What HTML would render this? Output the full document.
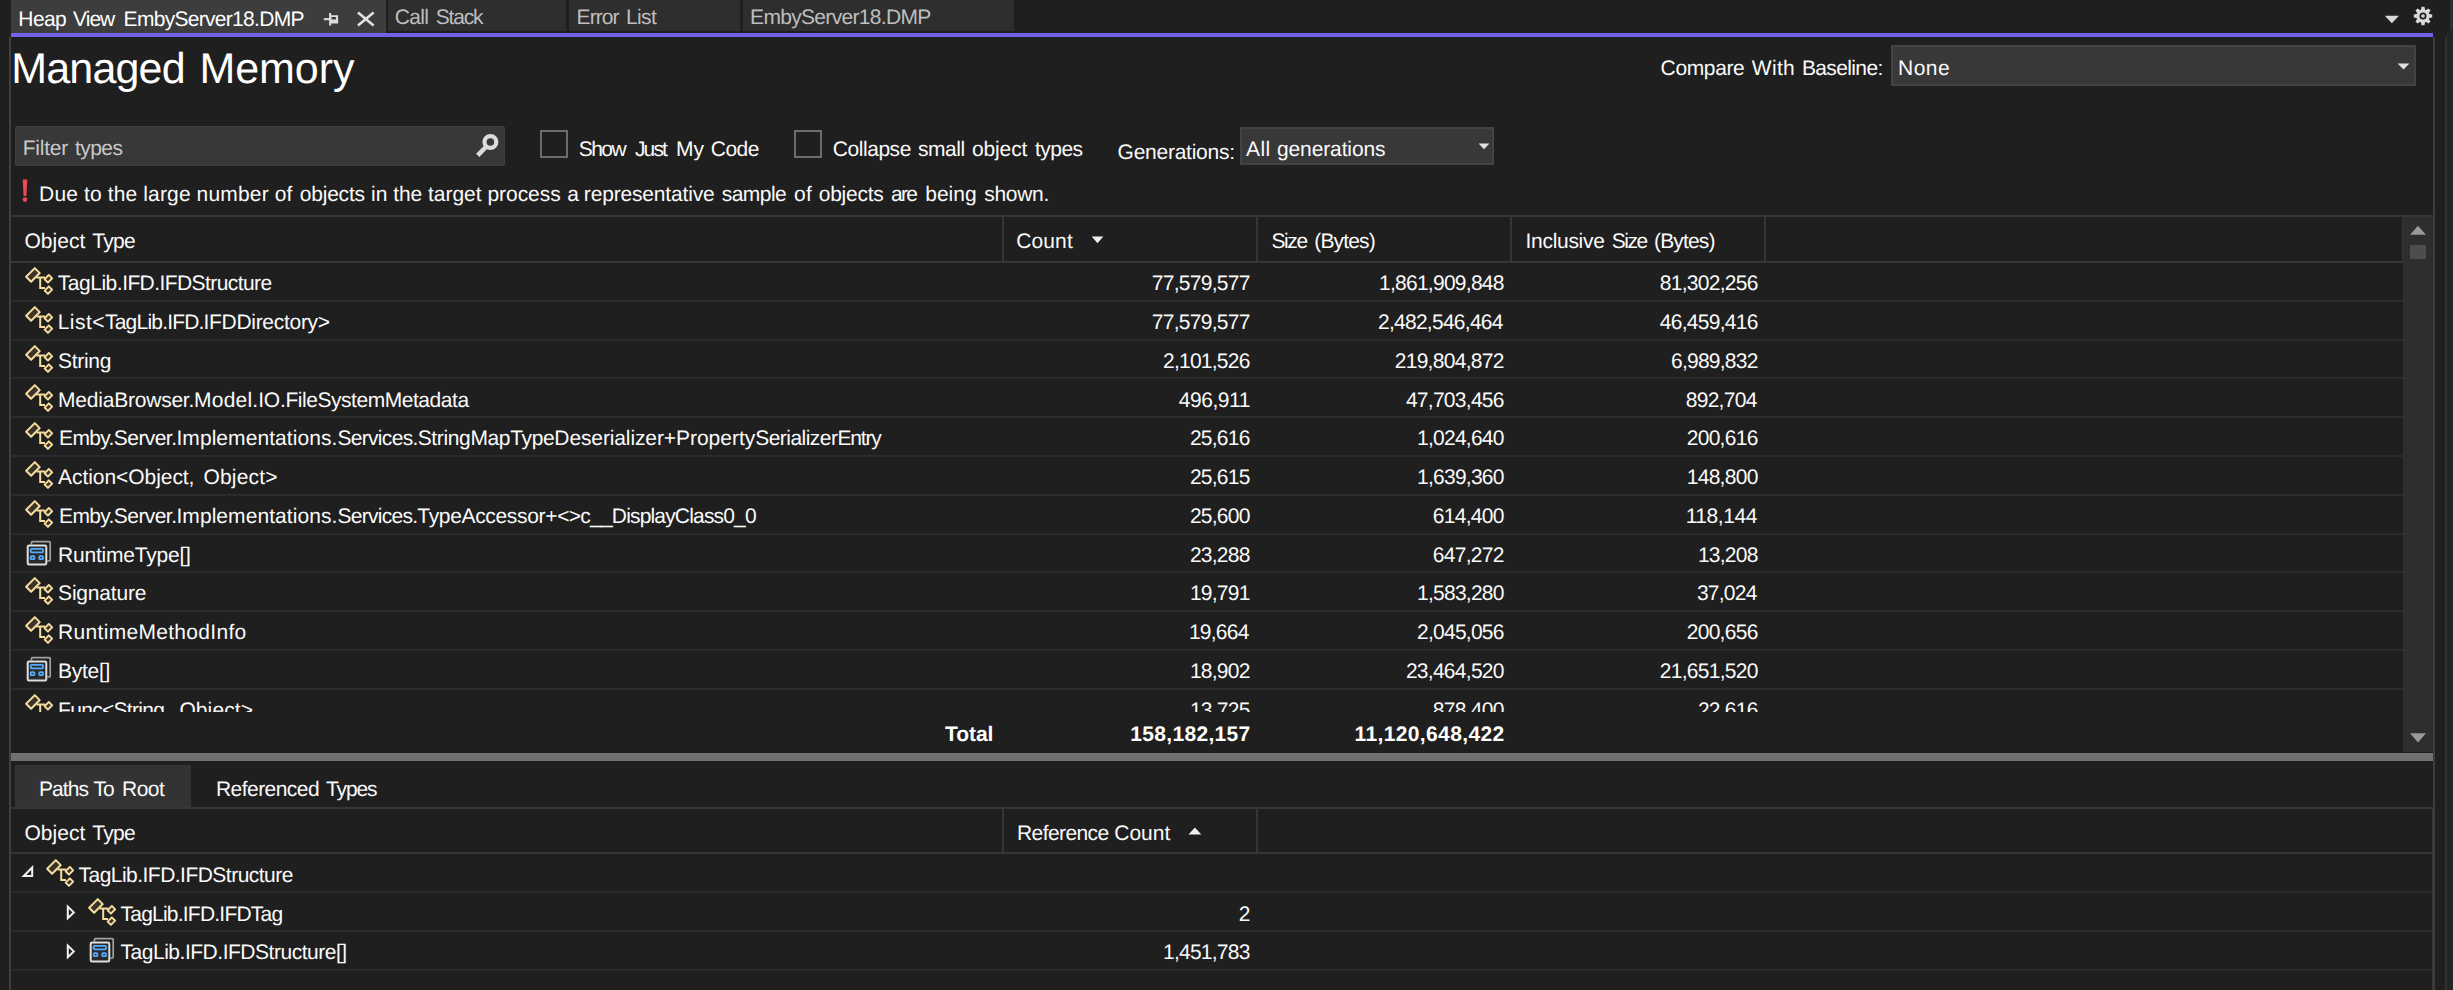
<!DOCTYPE html>
<html lang="en">
<head>
<meta charset="utf-8">
<title>Heap View EmbyServer18.DMP</title>
<style>
html,body{margin:0;padding:0;background:#1f1f1f;}
body{width:2453px;height:990px;position:relative;overflow:hidden;font-family:"Liberation Sans",sans-serif;color:#fafafa;text-rendering:geometricPrecision;}
.a{position:absolute;}
.t{position:absolute;white-space:pre;}
.i{position:absolute;overflow:visible;}
.hl{position:absolute;height:2px;background:#363636;}
.vl{position:absolute;width:2px;background:#363636;}
.rl{position:absolute;height:2px;background:#2b2b2b;left:11px;width:2392px;}
.rl2{position:absolute;height:2px;background:#2b2b2b;left:11px;width:2421px;}
.box{position:absolute;background:#383838;box-sizing:border-box;border:2px solid #434343;}
.cb{position:absolute;box-sizing:border-box;border:2px solid #6c6c6c;background:#1f1f1f;}
#clip{position:absolute;left:0;top:0;width:2403px;height:712px;overflow:hidden;}
</style>
</head>
<body>
<!-- document tab strip -->
<div class="a" style="left:11px;top:0;width:375px;height:34px;background:#3d3d3d"></div>
<div class="a" style="left:387.5px;top:0;width:178px;height:31px;background:#2e2e2e"></div>
<div class="a" style="left:569px;top:0;width:170.5px;height:31px;background:#2e2e2e"></div>
<div class="a" style="left:742.5px;top:0;width:271px;height:31px;background:#2e2e2e"></div>
<div class="a" style="left:11px;top:33px;width:2422px;height:4px;background:#7160e8"></div>
<!-- pin icon -->
<svg class="i" style="left:322px;top:11px" width="18" height="16" viewBox="0 0 18 16"><g fill="#dcdcdc"><rect x="1.8" y="7.1" width="6" height="2.1"/><rect x="7.1" y="2" width="2.1" height="12.5"/><path d="M9 4.3H16.1V12.6H9ZM9.4 6.1V8.6H13.9V6.1Z" fill-rule="evenodd"/></g></svg>
<!-- close icon -->
<svg class="i" style="left:356px;top:10px" width="20" height="18" viewBox="0 0 20 18"><path d="M2 2.5L17.6 15.5M17.6 2.5L2 15.5" stroke="#e2e2e2" stroke-width="2.6" fill="none"/></svg>
<!-- tab strip right: dropdown + gear -->
<svg class="i" style="left:2384px;top:14px" width="16" height="10" viewBox="0 0 16 10"><path d="M0.8 1.8H15L7.9 9.3Z" fill="#d8d8d8"/></svg>
<svg class="i" style="left:2412px;top:5px" width="22" height="22" viewBox="-11 -11 22 22"><g fill="#d8d8d8"><circle r="6.6"/><path d="M-1.5 -9.2H1.5L2.3 -5H-2.3ZM-1.5 9.2H1.5L2.3 5H-2.3Z" transform="rotate(0)"/><path d="M-1.5 -9.2H1.5L2.3 -5H-2.3ZM-1.5 9.2H1.5L2.3 5H-2.3Z" transform="rotate(45)"/><path d="M-1.5 -9.2H1.5L2.3 -5H-2.3ZM-1.5 9.2H1.5L2.3 5H-2.3Z" transform="rotate(90)"/><path d="M-1.5 -9.2H1.5L2.3 -5H-2.3ZM-1.5 9.2H1.5L2.3 5H-2.3Z" transform="rotate(135)"/></g><circle r="3.5" fill="#1f1f1f"/><circle r="1.8" fill="#d8d8d8"/></svg>
<!-- window frame lines -->
<div class="vl" style="left:9px;top:37px;height:953px;background:#3f3f3f"></div>
<div class="vl" style="left:2433px;top:37px;height:953px;background:#3d3d3d"></div>
<div class="vl" style="left:2445px;top:37px;height:953px;background:#333"></div>
<div class="a" style="left:2447px;top:33px;width:6px;height:957px;background:#242424"></div>
<div class="a" style="left:2450px;top:0;width:3px;height:31px;background:#2d2d2d"></div>

<!-- baseline combo -->
<div class="box" style="left:1890.5px;top:45.3px;width:525.5px;height:40.5px"></div>
<svg class="i" style="left:2397px;top:63px" width="13" height="7" viewBox="0 0 13 7"><path d="M0.6 0.6H12.4L6.5 6.6Z" fill="#e0e0e0"/></svg>

<!-- filter box -->
<div class="box" style="left:15px;top:126px;width:490.3px;height:40px;border:1px solid #3f3f3f;border-radius:2px"></div>
<svg class="i" style="left:470px;top:130px" width="32" height="30" viewBox="470 130 32 30"><circle cx="490.4" cy="142" r="5.9" fill="none" stroke="#dcdcdc" stroke-width="4.2"/><path d="M486.4 146.5L477.7 155.4" stroke="#dcdcdc" stroke-width="4.6" fill="none"/></svg>
<!-- checkboxes -->
<div class="cb" style="left:540px;top:130px;width:28px;height:28px"></div>
<div class="cb" style="left:794px;top:130px;width:28px;height:28px"></div>
<!-- generations combo -->
<div class="box" style="left:1240px;top:126.5px;width:254px;height:38.5px"></div>
<svg class="i" style="left:1478px;top:142.5px" width="12" height="7" viewBox="0 0 12 7"><path d="M0.6 0.6H11.4L6 6.2Z" fill="#e0e0e0"/></svg>
<!-- warning mark -->
<svg class="i" style="left:20px;top:177px" width="10" height="27" viewBox="20 177 10 27"><path d="M22.7 179.5H27.3L26.4 195.9H23.6Z" fill="#ee4b59"/><circle cx="25" cy="199.6" r="2.3" fill="#ee4b59"/></svg>

<!-- upper grid -->
<div class="hl" style="left:11px;top:215px;width:2422px"></div>
<div class="hl" style="left:11px;top:261px;width:2392px"></div>
<div class="vl" style="left:1002px;top:217px;height:44px"></div>
<div class="vl" style="left:1256px;top:217px;height:44px"></div>
<div class="vl" style="left:1510px;top:217px;height:44px"></div>
<div class="vl" style="left:1764px;top:217px;height:44px"></div>
<div class="vl" style="left:2401.5px;top:217px;height:44px;width:1.5px"></div>
<svg class="i" style="left:1091px;top:236px" width="13" height="8" viewBox="0 0 13 8"><path d="M0.7 0.5H12.3L6.5 7.2Z" fill="#f0f0f0"/></svg>
<div class="rl" style="top:300px"></div>
<div class="rl" style="top:339px"></div>
<div class="rl" style="top:377px"></div>
<div class="rl" style="top:416px"></div>
<div class="rl" style="top:455px"></div>
<div class="rl" style="top:494px"></div>
<div class="rl" style="top:533px"></div>
<div class="rl" style="top:571px"></div>
<div class="rl" style="top:610px"></div>
<div class="rl" style="top:649px"></div>
<div class="rl" style="top:688px"></div>
<div class="t" style="left:18.30px;top:9px;font-size:21px;line-height:21px;color:#ffffff;"><span style="letter-spacing:-0.575px;">Heap</span><span style="letter-spacing:0.961px"> </span><span style="letter-spacing:-0.957px;">View</span><span style="letter-spacing:3.457px"> </span><span style="letter-spacing:-0.705px;">EmbyServer18.DMP</span></div>
<div class="t" style="left:394.70px;top:7px;font-size:21px;line-height:21px;color:#bebebe;"><span style="letter-spacing:-0.670px;">Call</span><span style="letter-spacing:1.770px"> </span><span style="letter-spacing:-1.205px;">Stack</span></div>
<div class="t" style="left:576.60px;top:7px;font-size:21px;line-height:21px;color:#bebebe;"><span style="letter-spacing:-0.943px;">Error</span><span style="letter-spacing:1.515px"> </span><span style="letter-spacing:-0.582px;">List</span></div>
<div class="t" style="left:750.10px;top:7px;font-size:21px;line-height:21px;color:#bebebe;"><span style="letter-spacing:-0.685px;">EmbyServer18.DMP</span></div>
<div class="t" style="left:11.30px;top:48px;font-size:43px;line-height:43px;color:#ffffff;"><span style="letter-spacing:-0.832px;">Managed</span><span style="letter-spacing:2.671px"> </span><span style="letter-spacing:-0.057px;">Memory</span></div>
<div class="t" style="left:1660.60px;top:58px;font-size:21px;line-height:21px;color:#fafafa;"><span style="letter-spacing:-0.365px;">Compare</span><span style="letter-spacing:1.451px"> </span><span style="letter-spacing:0.360px;">With</span><span style="letter-spacing:0.927px"> </span><span style="letter-spacing:-0.632px;">Baseline:</span></div>
<div class="t" style="left:1898.10px;top:58px;font-size:21px;line-height:21px;color:#fafafa;"><span style="letter-spacing:0.425px;">None</span></div>
<div class="t" style="left:22.70px;top:138px;font-size:21px;line-height:21px;color:#c8c8c8;"><span style="letter-spacing:-0.234px;">Filter</span><span style="letter-spacing:1.207px"> </span><span style="letter-spacing:-0.548px;">types</span></div>
<div class="t" style="left:578.70px;top:139px;font-size:21px;line-height:21px;color:#fafafa;"><span style="letter-spacing:-1.522px;">Show</span><span style="letter-spacing:4.022px"> </span><span style="letter-spacing:-1.893px;">Just</span><span style="letter-spacing:4.224px"> </span><span style="letter-spacing:0.007px;">My</span><span style="letter-spacing:0.859px"> </span><span style="letter-spacing:-0.508px;">Code</span></div>
<div class="t" style="left:832.70px;top:139px;font-size:21px;line-height:21px;color:#fafafa;"><span style="letter-spacing:-0.433px;">Collapse</span><span style="letter-spacing:1.220px"> </span><span style="letter-spacing:-0.459px;">small</span><span style="letter-spacing:1.459px"> </span><span style="letter-spacing:-0.141px;">object</span><span style="letter-spacing:1.972px"> </span><span style="letter-spacing:-0.548px;">types</span></div>
<div class="t" style="left:1117.60px;top:142px;font-size:21px;line-height:21px;color:#fafafa;"><span style="letter-spacing:-0.255px;">Generations:</span></div>
<div class="t" style="left:1246.00px;top:139px;font-size:21px;line-height:21px;color:#fafafa;"><span style="letter-spacing:0.414px;">All</span><span style="letter-spacing:0.586px"> </span><span style="letter-spacing:-0.125px;">generations</span></div>
<div class="t" style="left:39.10px;top:184px;font-size:21px;line-height:21px;color:#fafafa;"><span style="letter-spacing:0.171px;word-spacing:-0.171px;">Due to the large number of</span><span style="letter-spacing:1.460px"> </span><span style="letter-spacing:-0.223px;">objects</span><span style="letter-spacing:0.388px"> </span><span style="letter-spacing:-0.034px;word-spacing:0.034px;">in the target process</span><span style="letter-spacing:0.699px"> </span><span style="letter-spacing:0.000px;">a</span><span style="letter-spacing:-0.914px"> </span><span style="letter-spacing:-0.177px;">representative</span><span style="letter-spacing:1.463px"> </span><span style="letter-spacing:-0.563px;">sample</span><span style="letter-spacing:2.050px"> </span><span style="letter-spacing:0.421px;">of</span><span style="letter-spacing:0.510px"> </span><span style="letter-spacing:-0.256px;">objects</span><span style="letter-spacing:1.622px"> </span><span style="letter-spacing:-1.636px;">are</span><span style="letter-spacing:2.923px"> </span><span style="letter-spacing:0.049px;">being</span><span style="letter-spacing:1.537px"> </span><span style="letter-spacing:-0.281px;">shown.</span></div>
<div class="t" style="left:24.50px;top:231px;font-size:21px;line-height:21px;color:#fafafa;"><span style="letter-spacing:0.028px;">Object</span><span style="letter-spacing:1.103px"> </span><span style="letter-spacing:-0.716px;">Type</span></div>
<div class="t" style="left:1016.30px;top:231px;font-size:21px;line-height:21px;color:#fafafa;"><span style="letter-spacing:0.099px;">Count</span></div>
<div class="t" style="left:1271.50px;top:231px;font-size:21px;line-height:21px;color:#fafafa;"><span style="letter-spacing:-1.424px;">Size</span><span style="letter-spacing:1.810px"> </span><span style="letter-spacing:-0.852px;">(Bytes)</span></div>
<div class="t" style="left:1525.50px;top:231px;font-size:21px;line-height:21px;color:#fafafa;"><span style="letter-spacing:-0.290px;">Inclusive</span><span style="letter-spacing:1.277px"> </span><span style="letter-spacing:-1.457px;">Size</span><span style="letter-spacing:1.444px"> </span><span style="letter-spacing:-0.852px;">(Bytes)</span></div>
<div id="clip">
<svg class="i" style="left:25.00px;top:267.00px" width="28" height="29" viewBox="0 0 28 29"><g fill="#3a3429" stroke="#f6dd9f" stroke-width="2" stroke-linejoin="round"><path d="M11.5 10.4H20M15.2 10.4V20.9H20" fill="none" stroke-linejoin="miter"/><rect x="-6.1" y="-3.5" width="12.2" height="7" transform="translate(7.95 7.95) rotate(-45)"/><rect x="-3" y="-2.35" width="6" height="4.7" stroke-width="1.9" transform="translate(23.4 11.8) rotate(-45)"/><rect x="-3" y="-2.35" width="6" height="4.7" stroke-width="1.9" transform="translate(23.4 23.1) rotate(-45)"/></g></svg>
<div class="t" style="left:57.70px;top:273px;font-size:21px;line-height:21px;color:#fafafa;"><span style="letter-spacing:-0.460px;">TagLib.</span><span style="letter-spacing:-0.616px;">IFD.</span><span style="letter-spacing:-0.568px;">IFDStructure</span></div>
<div class="t" style="left:1151.78px;top:273px;font-size:21px;line-height:21px;letter-spacing:-0.723px;color:#fafafa;">77,579,577</div>
<div class="t" style="left:1378.98px;top:273px;font-size:21px;line-height:21px;letter-spacing:-0.733px;color:#fafafa;">1,861,909,848</div>
<div class="t" style="left:1659.78px;top:273px;font-size:21px;line-height:21px;letter-spacing:-0.723px;color:#fafafa;">81,302,256</div>
<svg class="i" style="left:25.00px;top:306.00px" width="28" height="29" viewBox="0 0 28 29"><g fill="#3a3429" stroke="#f6dd9f" stroke-width="2" stroke-linejoin="round"><path d="M11.5 10.4H20M15.2 10.4V20.9H20" fill="none" stroke-linejoin="miter"/><rect x="-6.1" y="-3.5" width="12.2" height="7" transform="translate(7.95 7.95) rotate(-45)"/><rect x="-3" y="-2.35" width="6" height="4.7" stroke-width="1.9" transform="translate(23.4 11.8) rotate(-45)"/><rect x="-3" y="-2.35" width="6" height="4.7" stroke-width="1.9" transform="translate(23.4 23.1) rotate(-45)"/></g></svg>
<div class="t" style="left:57.70px;top:312px;font-size:21px;line-height:21px;color:#fafafa;"><span style="letter-spacing:0.471px;">List&lt;</span><span style="letter-spacing:-0.788px;">TagLib.</span><span style="letter-spacing:-0.866px;">IFD.</span><span style="letter-spacing:-0.286px;">IFDDirectory&gt;</span></div>
<div class="t" style="left:1151.78px;top:312px;font-size:21px;line-height:21px;letter-spacing:-0.723px;color:#fafafa;">77,579,577</div>
<div class="t" style="left:1377.98px;top:312px;font-size:21px;line-height:21px;letter-spacing:-0.733px;color:#fafafa;">2,482,546,464</div>
<div class="t" style="left:1659.78px;top:312px;font-size:21px;line-height:21px;letter-spacing:-0.723px;color:#fafafa;">46,459,416</div>
<svg class="i" style="left:25.00px;top:345.00px" width="28" height="29" viewBox="0 0 28 29"><g fill="#3a3429" stroke="#f6dd9f" stroke-width="2" stroke-linejoin="round"><path d="M11.5 10.4H20M15.2 10.4V20.9H20" fill="none" stroke-linejoin="miter"/><rect x="-6.1" y="-3.5" width="12.2" height="7" transform="translate(7.95 7.95) rotate(-45)"/><rect x="-3" y="-2.35" width="6" height="4.7" stroke-width="1.9" transform="translate(23.4 11.8) rotate(-45)"/><rect x="-3" y="-2.35" width="6" height="4.7" stroke-width="1.9" transform="translate(23.4 23.1) rotate(-45)"/></g></svg>
<div class="t" style="left:58.10px;top:351px;font-size:21px;line-height:21px;color:#fafafa;"><span style="letter-spacing:-0.316px;">String</span></div>
<div class="t" style="left:1162.98px;top:351px;font-size:21px;line-height:21px;letter-spacing:-0.753px;color:#fafafa;">2,101,526</div>
<div class="t" style="left:1394.68px;top:351px;font-size:21px;line-height:21px;letter-spacing:-0.698px;color:#fafafa;">219,804,872</div>
<div class="t" style="left:1670.98px;top:351px;font-size:21px;line-height:21px;letter-spacing:-0.753px;color:#fafafa;">6,989,832</div>
<svg class="i" style="left:25.00px;top:384.00px" width="28" height="29" viewBox="0 0 28 29"><g fill="#3a3429" stroke="#f6dd9f" stroke-width="2" stroke-linejoin="round"><path d="M11.5 10.4H20M15.2 10.4V20.9H20" fill="none" stroke-linejoin="miter"/><rect x="-6.1" y="-3.5" width="12.2" height="7" transform="translate(7.95 7.95) rotate(-45)"/><rect x="-3" y="-2.35" width="6" height="4.7" stroke-width="1.9" transform="translate(23.4 11.8) rotate(-45)"/><rect x="-3" y="-2.35" width="6" height="4.7" stroke-width="1.9" transform="translate(23.4 23.1) rotate(-45)"/></g></svg>
<div class="t" style="left:58.10px;top:390px;font-size:21px;line-height:21px;color:#fafafa;"><span style="letter-spacing:-0.222px;">MediaBrowser.</span><span style="letter-spacing:0.195px;">Model.</span><span style="letter-spacing:-0.301px;">IO.</span><span style="letter-spacing:-0.455px;">FileSystemMetadata</span></div>
<div class="t" style="left:1178.68px;top:390px;font-size:21px;line-height:21px;letter-spacing:-0.442px;color:#fafafa;">496,911</div>
<div class="t" style="left:1405.88px;top:390px;font-size:21px;line-height:21px;letter-spacing:-0.723px;color:#fafafa;">47,703,456</div>
<div class="t" style="left:1685.68px;top:390px;font-size:21px;line-height:21px;letter-spacing:-0.702px;color:#fafafa;">892,704</div>
<svg class="i" style="left:25.00px;top:422.00px" width="28" height="29" viewBox="0 0 28 29"><g fill="#3a3429" stroke="#f6dd9f" stroke-width="2" stroke-linejoin="round"><path d="M11.5 10.4H20M15.2 10.4V20.9H20" fill="none" stroke-linejoin="miter"/><rect x="-6.1" y="-3.5" width="12.2" height="7" transform="translate(7.95 7.95) rotate(-45)"/><rect x="-3" y="-2.35" width="6" height="4.7" stroke-width="1.9" transform="translate(23.4 11.8) rotate(-45)"/><rect x="-3" y="-2.35" width="6" height="4.7" stroke-width="1.9" transform="translate(23.4 23.1) rotate(-45)"/></g></svg>
<div class="t" style="left:59.00px;top:428px;font-size:21px;line-height:21px;color:#fafafa;"><span style="letter-spacing:-0.631px;">Emby.</span><span style="letter-spacing:-0.561px;">Server.</span><span style="letter-spacing:0.068px;">Implementations.</span><span style="letter-spacing:-0.684px;">Services.</span><span style="letter-spacing:-0.349px;">StringMapType</span><span style="letter-spacing:-0.118px;">Deserializer+</span><span style="letter-spacing:-0.008px;">Property</span><span style="letter-spacing:-0.533px;">Serializer</span><span style="letter-spacing:-1.178px;">Entry</span></div>
<div class="t" style="left:1189.88px;top:428px;font-size:21px;line-height:21px;letter-spacing:-0.746px;color:#fafafa;">25,616</div>
<div class="t" style="left:1417.08px;top:428px;font-size:21px;line-height:21px;letter-spacing:-0.753px;color:#fafafa;">1,024,640</div>
<div class="t" style="left:1686.68px;top:428px;font-size:21px;line-height:21px;letter-spacing:-0.702px;color:#fafafa;">200,616</div>
<svg class="i" style="left:25.00px;top:461.00px" width="28" height="29" viewBox="0 0 28 29"><g fill="#3a3429" stroke="#f6dd9f" stroke-width="2" stroke-linejoin="round"><path d="M11.5 10.4H20M15.2 10.4V20.9H20" fill="none" stroke-linejoin="miter"/><rect x="-6.1" y="-3.5" width="12.2" height="7" transform="translate(7.95 7.95) rotate(-45)"/><rect x="-3" y="-2.35" width="6" height="4.7" stroke-width="1.9" transform="translate(23.4 11.8) rotate(-45)"/><rect x="-3" y="-2.35" width="6" height="4.7" stroke-width="1.9" transform="translate(23.4 23.1) rotate(-45)"/></g></svg>
<div class="t" style="left:58.10px;top:467px;font-size:21px;line-height:21px;color:#fafafa;"><span style="letter-spacing:-0.063px;">Action&lt;Object,</span><span style="letter-spacing:3.194px"> </span><span style="letter-spacing:0.185px;">Object&gt;</span></div>
<div class="t" style="left:1189.88px;top:467px;font-size:21px;line-height:21px;letter-spacing:-0.746px;color:#fafafa;">25,615</div>
<div class="t" style="left:1417.08px;top:467px;font-size:21px;line-height:21px;letter-spacing:-0.753px;color:#fafafa;">1,639,360</div>
<div class="t" style="left:1686.68px;top:467px;font-size:21px;line-height:21px;letter-spacing:-0.702px;color:#fafafa;">148,800</div>
<svg class="i" style="left:25.00px;top:500.00px" width="28" height="29" viewBox="0 0 28 29"><g fill="#3a3429" stroke="#f6dd9f" stroke-width="2" stroke-linejoin="round"><path d="M11.5 10.4H20M15.2 10.4V20.9H20" fill="none" stroke-linejoin="miter"/><rect x="-6.1" y="-3.5" width="12.2" height="7" transform="translate(7.95 7.95) rotate(-45)"/><rect x="-3" y="-2.35" width="6" height="4.7" stroke-width="1.9" transform="translate(23.4 11.8) rotate(-45)"/><rect x="-3" y="-2.35" width="6" height="4.7" stroke-width="1.9" transform="translate(23.4 23.1) rotate(-45)"/></g></svg>
<div class="t" style="left:59.00px;top:506px;font-size:21px;line-height:21px;color:#fafafa;"><span style="letter-spacing:-0.631px;">Emby.</span><span style="letter-spacing:-0.561px;">Server.</span><span style="letter-spacing:0.068px;">Implementations.</span><span style="letter-spacing:-0.718px;">Services.</span><span style="letter-spacing:-0.335px;">TypeAccessor+</span><span style="letter-spacing:-0.737px;">&lt;&gt;c__</span><span style="letter-spacing:-0.830px;">DisplayClass0_0</span></div>
<div class="t" style="left:1189.88px;top:506px;font-size:21px;line-height:21px;letter-spacing:-0.746px;color:#fafafa;">25,600</div>
<div class="t" style="left:1432.78px;top:506px;font-size:21px;line-height:21px;letter-spacing:-0.702px;color:#fafafa;">614,400</div>
<div class="t" style="left:1685.68px;top:506px;font-size:21px;line-height:21px;letter-spacing:-0.442px;color:#fafafa;">118,144</div>
<svg class="i" style="left:25.00px;top:539.00px" width="28" height="29" viewBox="0 0 28 29"><path d="M6.5 5.4V3.6Q6.5 2.6 7.5 2.6H24.2Q25.2 2.6 25.2 3.6V21Q25.2 22 24.2 22H22.3" fill="none" stroke="#a2a2a2" stroke-width="1.7"/><rect x="2.7" y="6.4" width="18.6" height="19.2" rx="1.3" fill="#2b2b2b" stroke="#dedede" stroke-width="2"/><g fill="none" stroke="#55acff" stroke-width="1.8"><rect x="5.7" y="9.8" width="12.3" height="3.5" rx="1"/><rect x="5.7" y="17.1" width="3.7" height="3.1" rx="0.8"/><rect x="14.3" y="17.1" width="3.7" height="3.1" rx="0.8"/></g></svg>
<div class="t" style="left:58.10px;top:545px;font-size:21px;line-height:21px;color:#fafafa;"><span style="letter-spacing:-0.222px;">RuntimeType[]</span></div>
<div class="t" style="left:1189.88px;top:545px;font-size:21px;line-height:21px;letter-spacing:-0.746px;color:#fafafa;">23,288</div>
<div class="t" style="left:1432.78px;top:545px;font-size:21px;line-height:21px;letter-spacing:-0.702px;color:#fafafa;">647,272</div>
<div class="t" style="left:1697.88px;top:545px;font-size:21px;line-height:21px;letter-spacing:-0.746px;color:#fafafa;">13,208</div>
<svg class="i" style="left:25.00px;top:577.00px" width="28" height="29" viewBox="0 0 28 29"><g fill="#3a3429" stroke="#f6dd9f" stroke-width="2" stroke-linejoin="round"><path d="M11.5 10.4H20M15.2 10.4V20.9H20" fill="none" stroke-linejoin="miter"/><rect x="-6.1" y="-3.5" width="12.2" height="7" transform="translate(7.95 7.95) rotate(-45)"/><rect x="-3" y="-2.35" width="6" height="4.7" stroke-width="1.9" transform="translate(23.4 11.8) rotate(-45)"/><rect x="-3" y="-2.35" width="6" height="4.7" stroke-width="1.9" transform="translate(23.4 23.1) rotate(-45)"/></g></svg>
<div class="t" style="left:58.10px;top:583px;font-size:21px;line-height:21px;color:#fafafa;"><span style="letter-spacing:-0.202px;">Signature</span></div>
<div class="t" style="left:1189.88px;top:583px;font-size:21px;line-height:21px;letter-spacing:-0.746px;color:#fafafa;">19,791</div>
<div class="t" style="left:1417.08px;top:583px;font-size:21px;line-height:21px;letter-spacing:-0.753px;color:#fafafa;">1,583,280</div>
<div class="t" style="left:1696.88px;top:583px;font-size:21px;line-height:21px;letter-spacing:-0.746px;color:#fafafa;">37,024</div>
<svg class="i" style="left:25.00px;top:616.00px" width="28" height="29" viewBox="0 0 28 29"><g fill="#3a3429" stroke="#f6dd9f" stroke-width="2" stroke-linejoin="round"><path d="M11.5 10.4H20M15.2 10.4V20.9H20" fill="none" stroke-linejoin="miter"/><rect x="-6.1" y="-3.5" width="12.2" height="7" transform="translate(7.95 7.95) rotate(-45)"/><rect x="-3" y="-2.35" width="6" height="4.7" stroke-width="1.9" transform="translate(23.4 11.8) rotate(-45)"/><rect x="-3" y="-2.35" width="6" height="4.7" stroke-width="1.9" transform="translate(23.4 23.1) rotate(-45)"/></g></svg>
<div class="t" style="left:58.10px;top:622px;font-size:21px;line-height:21px;color:#fafafa;"><span style="letter-spacing:0.307px;">RuntimeMethodInfo</span></div>
<div class="t" style="left:1188.88px;top:622px;font-size:21px;line-height:21px;letter-spacing:-0.746px;color:#fafafa;">19,664</div>
<div class="t" style="left:1417.08px;top:622px;font-size:21px;line-height:21px;letter-spacing:-0.753px;color:#fafafa;">2,045,056</div>
<div class="t" style="left:1686.68px;top:622px;font-size:21px;line-height:21px;letter-spacing:-0.702px;color:#fafafa;">200,656</div>
<svg class="i" style="left:25.00px;top:655.00px" width="28" height="29" viewBox="0 0 28 29"><path d="M6.5 5.4V3.6Q6.5 2.6 7.5 2.6H24.2Q25.2 2.6 25.2 3.6V21Q25.2 22 24.2 22H22.3" fill="none" stroke="#a2a2a2" stroke-width="1.7"/><rect x="2.7" y="6.4" width="18.6" height="19.2" rx="1.3" fill="#2b2b2b" stroke="#dedede" stroke-width="2"/><g fill="none" stroke="#55acff" stroke-width="1.8"><rect x="5.7" y="9.8" width="12.3" height="3.5" rx="1"/><rect x="5.7" y="17.1" width="3.7" height="3.1" rx="0.8"/><rect x="14.3" y="17.1" width="3.7" height="3.1" rx="0.8"/></g></svg>
<div class="t" style="left:58.10px;top:661px;font-size:21px;line-height:21px;color:#fafafa;"><span style="letter-spacing:-0.291px;">Byte[]</span></div>
<div class="t" style="left:1189.88px;top:661px;font-size:21px;line-height:21px;letter-spacing:-0.746px;color:#fafafa;">18,902</div>
<div class="t" style="left:1405.88px;top:661px;font-size:21px;line-height:21px;letter-spacing:-0.723px;color:#fafafa;">23,464,520</div>
<div class="t" style="left:1659.78px;top:661px;font-size:21px;line-height:21px;letter-spacing:-0.723px;color:#fafafa;">21,651,520</div>
<svg class="i" style="left:25.00px;top:694.00px" width="28" height="29" viewBox="0 0 28 29"><g fill="#3a3429" stroke="#f6dd9f" stroke-width="2" stroke-linejoin="round"><path d="M11.5 10.4H20M15.2 10.4V20.9H20" fill="none" stroke-linejoin="miter"/><rect x="-6.1" y="-3.5" width="12.2" height="7" transform="translate(7.95 7.95) rotate(-45)"/><rect x="-3" y="-2.35" width="6" height="4.7" stroke-width="1.9" transform="translate(23.4 11.8) rotate(-45)"/><rect x="-3" y="-2.35" width="6" height="4.7" stroke-width="1.9" transform="translate(23.4 23.1) rotate(-45)"/></g></svg>
<div class="t" style="left:58.10px;top:700px;font-size:21px;line-height:21px;color:#fafafa;"><span style="letter-spacing:-0.701px;">Func&lt;String,</span><span style="letter-spacing:4.232px"> </span><span style="letter-spacing:0.101px;">Object&gt;</span></div>
<div class="t" style="left:1189.88px;top:700px;font-size:21px;line-height:21px;letter-spacing:-0.746px;color:#fafafa;">13,725</div>
<div class="t" style="left:1432.78px;top:700px;font-size:21px;line-height:21px;letter-spacing:-0.702px;color:#fafafa;">878,400</div>
<div class="t" style="left:1697.88px;top:700px;font-size:21px;line-height:21px;letter-spacing:-0.746px;color:#fafafa;">22,616</div>
</div>
<!-- scrollbar -->
<div class="a" style="left:2403px;top:217px;width:30px;height:535px;background:#2e2e2e"></div>
<svg class="i" style="left:2410px;top:225px" width="16" height="10" viewBox="0 0 16 10"><path d="M0 9.8H16L8 0.8Z" fill="#999"/></svg>
<div class="a" style="left:2410px;top:245px;width:16px;height:14px;background:#4d4d4d"></div>
<svg class="i" style="left:2410px;top:732.5px" width="16" height="10" viewBox="0 0 16 10"><path d="M0 0.3H16L8 9.4Z" fill="#999"/></svg>
<!-- splitter -->
<div class="a" style="left:11px;top:753px;width:2422px;height:8px;background:#707070"></div>

<!-- lower pane -->
<div class="a" style="left:14.5px;top:765px;width:176.5px;height:42px;background:#333333"></div>
<div class="hl" style="left:11px;top:807px;width:2422px"></div>
<div class="hl" style="left:11px;top:852px;width:2421px"></div>
<div class="vl" style="left:1002px;top:809px;height:43px"></div>
<div class="vl" style="left:1256px;top:809px;height:43px"></div>
<div class="vl" style="left:2432px;top:809px;height:181px;width:1px"></div>
<div class="rl2" style="top:891px"></div>
<div class="rl2" style="top:929.8px"></div>
<div class="rl2" style="top:968.5px"></div>
<svg class="i" style="left:1188px;top:826.5px" width="14" height="8" viewBox="0 0 14 8"><path d="M0.5 7.6H13.3L6.9 0.6Z" fill="#f0f0f0"/></svg>
<!-- tree expanders -->
<svg class="i" style="left:20px;top:864px" width="16" height="16" viewBox="0 0 16 16"><path d="M12.2 3.5V12H3.7Z" fill="none" stroke="#f2f2f2" stroke-width="2"/></svg>
<svg class="i" style="left:64px;top:902.95px" width="14" height="19" viewBox="0 0 14 19"><path d="M3.8 3.6V15.2L9.8 9.4Z" fill="none" stroke="#f2f2f2" stroke-width="2"/></svg>
<svg class="i" style="left:64px;top:941.7px" width="14" height="19" viewBox="0 0 14 19"><path d="M3.8 3.6V15.2L9.8 9.4Z" fill="none" stroke="#f2f2f2" stroke-width="2"/></svg>

<div class="t" style="left:945.10px;top:724px;font-size:21px;line-height:21px;color:#ffffff;font-weight:700;"><span style="letter-spacing:-0.092px;">Total</span></div>
<div class="t" style="left:1130.31px;top:724px;font-size:21px;line-height:21px;letter-spacing:0.319px;color:#ffffff;font-weight:700;">158,182,157</div>
<div class="t" style="left:1354.55px;top:724px;font-size:21px;line-height:21px;letter-spacing:0.370px;color:#ffffff;font-weight:700;">11,120,648,422</div>
<div class="t" style="left:39.00px;top:779px;font-size:21px;line-height:21px;color:#fafafa;"><span style="letter-spacing:-0.925px;">Paths</span><span style="letter-spacing:-0.510px"> </span><span style="letter-spacing:-0.900px;">To</span><span style="letter-spacing:2.386px"> </span><span style="letter-spacing:-0.541px;">Root</span></div>
<div class="t" style="left:216.00px;top:779px;font-size:21px;line-height:21px;color:#fafafa;"><span style="letter-spacing:-0.554px;">Referenced</span><span style="letter-spacing:1.241px"> </span><span style="letter-spacing:-1.157px;">Types</span></div>
<div class="t" style="left:24.50px;top:823px;font-size:21px;line-height:21px;color:#fafafa;"><span style="letter-spacing:0.028px;">Object</span><span style="letter-spacing:1.103px"> </span><span style="letter-spacing:-0.716px;">Type</span></div>
<div class="t" style="left:1017.00px;top:823px;font-size:21px;line-height:21px;color:#fafafa;"><span style="letter-spacing:-0.589px;">Reference</span><span style="letter-spacing:-0.125px"> </span><span style="letter-spacing:-0.026px;">Count</span></div>
<svg class="i" style="left:45.70px;top:859.00px" width="28" height="29" viewBox="0 0 28 29"><g fill="#3a3429" stroke="#f6dd9f" stroke-width="2" stroke-linejoin="round"><path d="M11.5 10.4H20M15.2 10.4V20.9H20" fill="none" stroke-linejoin="miter"/><rect x="-6.1" y="-3.5" width="12.2" height="7" transform="translate(7.95 7.95) rotate(-45)"/><rect x="-3" y="-2.35" width="6" height="4.7" stroke-width="1.9" transform="translate(23.4 11.8) rotate(-45)"/><rect x="-3" y="-2.35" width="6" height="4.7" stroke-width="1.9" transform="translate(23.4 23.1) rotate(-45)"/></g></svg>
<div class="t" style="left:78.50px;top:865px;font-size:21px;line-height:21px;color:#fafafa;"><span style="letter-spacing:-0.524px;">TagLib.IFD.IFDStructure</span></div>
<svg class="i" style="left:87.90px;top:898.00px" width="28" height="29" viewBox="0 0 28 29"><g fill="#3a3429" stroke="#f6dd9f" stroke-width="2" stroke-linejoin="round"><path d="M11.5 10.4H20M15.2 10.4V20.9H20" fill="none" stroke-linejoin="miter"/><rect x="-6.1" y="-3.5" width="12.2" height="7" transform="translate(7.95 7.95) rotate(-45)"/><rect x="-3" y="-2.35" width="6" height="4.7" stroke-width="1.9" transform="translate(23.4 11.8) rotate(-45)"/><rect x="-3" y="-2.35" width="6" height="4.7" stroke-width="1.9" transform="translate(23.4 23.1) rotate(-45)"/></g></svg>
<div class="t" style="left:120.50px;top:904px;font-size:21px;line-height:21px;color:#fafafa;"><span style="letter-spacing:-0.774px;">TagLib.IFD.IFDTag</span></div>
<div class="t" style="left:1238.70px;top:904px;font-size:21px;line-height:21px;letter-spacing:0.000px;color:#fafafa;">2</div>
<svg class="i" style="left:88.30px;top:936.00px" width="28" height="29" viewBox="0 0 28 29"><path d="M6.5 5.4V3.6Q6.5 2.6 7.5 2.6H24.2Q25.2 2.6 25.2 3.6V21Q25.2 22 24.2 22H22.3" fill="none" stroke="#a2a2a2" stroke-width="1.7"/><rect x="2.7" y="6.4" width="18.6" height="19.2" rx="1.3" fill="#2b2b2b" stroke="#dedede" stroke-width="2"/><g fill="none" stroke="#55acff" stroke-width="1.8"><rect x="5.7" y="9.8" width="12.3" height="3.5" rx="1"/><rect x="5.7" y="17.1" width="3.7" height="3.1" rx="0.8"/><rect x="14.3" y="17.1" width="3.7" height="3.1" rx="0.8"/></g></svg>
<div class="t" style="left:120.50px;top:942px;font-size:21px;line-height:21px;color:#fafafa;"><span style="letter-spacing:-0.477px;">TagLib.IFD.IFDStructure[]</span></div>
<div class="t" style="left:1162.98px;top:942px;font-size:21px;line-height:21px;letter-spacing:-0.753px;color:#fafafa;">1,451,783</div>
</body>
</html>
